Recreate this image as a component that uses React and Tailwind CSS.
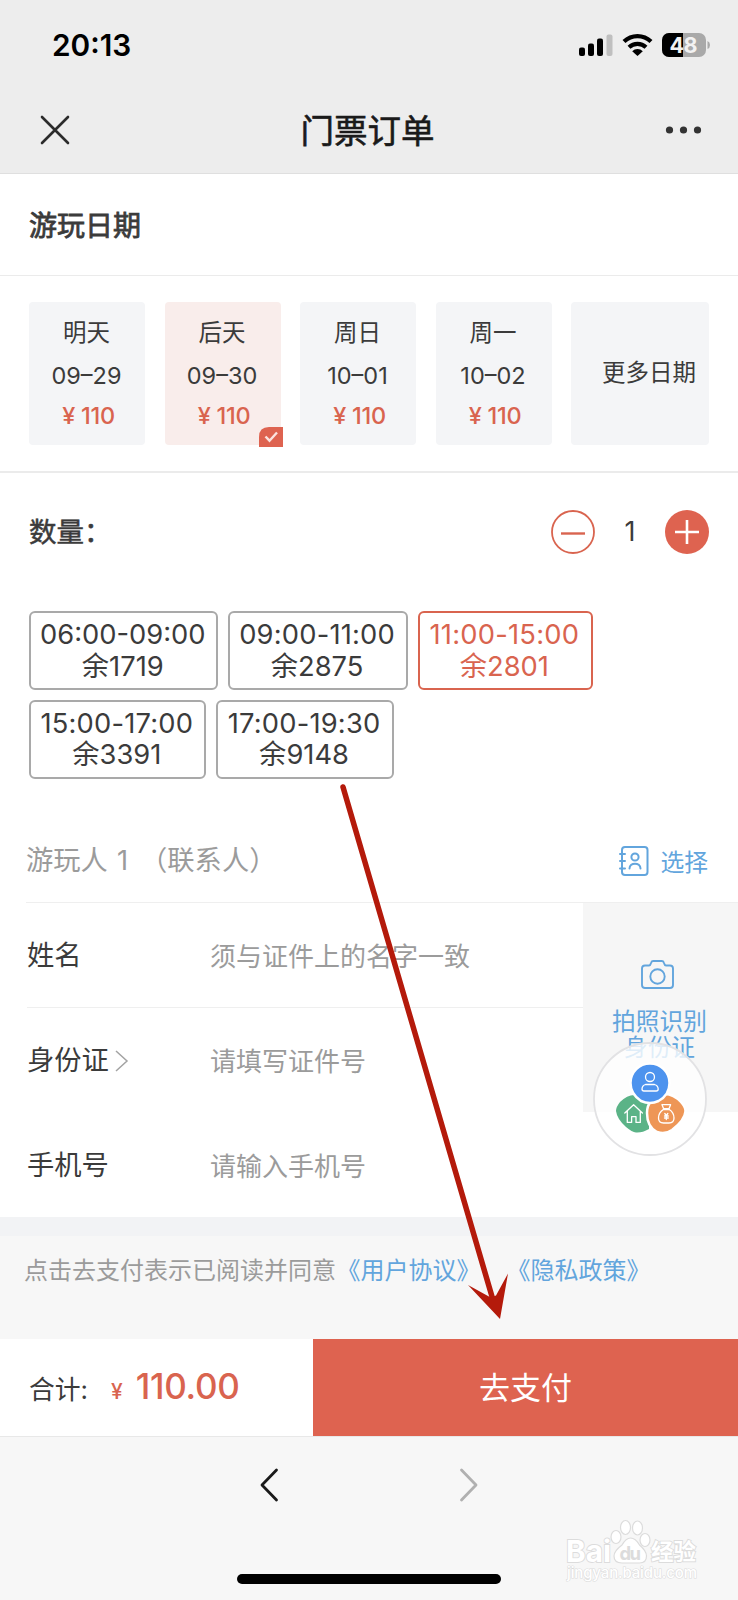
const dates = [
  { day: '明天', date: '09–29' },
  { day: '后天', date: '09–30', selected: true },
  { day: '周日', date: '10–01' },
  { day: '周一', date: '10–02' },
];

const slotRows = [
  [
    { time: '06:00-09:00', left: '余1719', width: 'w-[189px]' },
    { time: '09:00-11:00', left: '余2875', width: 'w-[180px]', spacing: 'tracking-[0.2px]' },
    { time: '11:00-15:00', left: '余2801', width: 'w-[175px]', spacing: 'tracking-[0.25px]', selected: true },
  ],
  [
    { time: '15:00-17:00', left: '余3391', width: 'w-[177px]', spacing: 'tracking-[0.2px]' },
    { time: '17:00-19:30', left: '余9148', width: 'w-[178px]', spacing: 'tracking-[0.2px]' },
  ],
];

function StatusIcons() {
  return (
    <svg width="132" height="26" viewBox="0 0 132 26">
      <rect x="0" y="15.500" width="6" height="8.500" rx="2" />
      <rect x="9" y="11.500" width="6" height="12.500" rx="2" />
      <rect x="18" y="6.500" width="6" height="17.500" rx="2" />
      <rect x="27.500" y="2.500" width="6" height="21.500" rx="2" fill="#bfbfbf" />
      <g fill="none" stroke="#000" strokeWidth="4.200">
        <path d="M45 9.500a19.500 19.500 0 0 1 27 0" />
        <path d="M50 15.300a12.500 12.500 0 0 1 17 0" />
      </g>
      <path d="M53.200 19.300a7.500 7.500 0 0 1 10.600 0L58.500 24z" />
      <rect x="83" y="1" width="44" height="24" rx="7" fill="#a9a9a9" />
      <path d="M90 1H104V25H90A7 7 0 0 1 83 18V8A7 7 0 0 1 90 1z" />
      <path d="M128.500 9q2.500 1 2.500 4t-2.500 4z" fill="#a9a9a9" />
      <text x="104.500" y="20.700" textAnchor="middle" fill="#f2f2f2" fontSize="21.500" fontWeight="700" fontFamily="Inter" textLength="28">48</text>
    </svg>
  );
}

function DateCard({ day, date, selected }) {
  return (
    <div className={`relative flex h-[143px] w-[116px] flex-col items-center rounded pt-[14px] pr-[1px] ${selected ? 'bg-[#f9edeb]' : 'bg-[#f4f5f7]'}`}>
      <div className="h-[34px] text-[23.5px] leading-[34px]">{day}</div>
      <div className="mt-[9px] h-[34px] text-[23.5px] leading-[34px]">{date}</div>
      <div className="mt-[6px] ml-[4px] h-[34px] text-[23.5px] leading-[34px] font-medium tracking-[-0.3px] text-[#d9644f]">¥ 110</div>
      {selected && (
        <svg className="absolute -right-[2px] -bottom-[2px]" width="24" height="20" viewBox="0 0 24 20">
          <path d="M0 20V10Q0 0 10 0H24V20z" fill="#de6350" />
          <path d="M6.500 9.500l4 4.200 7.500-8.200" fill="none" stroke="#fbe3df" strokeWidth="2.400" />
        </svg>
      )}
    </div>
  );
}

function Slot({ time, left, width, spacing, selected }) {
  return (
    <div className={`flex h-[79px] flex-col items-center justify-center rounded-[6px] border-2 pr-[1.5px] text-[27.3px] leading-[31.5px] whitespace-nowrap ${width} ${selected ? 'border-[#d9644f] text-[#d9644f]' : 'border-[#a9a9a9] text-[#3b3b3b]'}`}>
      <div className={spacing}>{time}</div>
      <div>{left}</div>
    </div>
  );
}

function ContactsIcon() {
  return (
    <svg width="30" height="30" viewBox="0 0 30 30" fill="none" stroke="#62a5dd" strokeWidth="2" strokeLinecap="round">
      <rect x="3" y="1" width="25.500" height="28" rx="3" />
      <path d="M1 8h5M1 15h5M1 22.500h5" />
      <circle cx="16" cy="11" r="3.600" />
      <path d="M10.500 22.500c0-6.500 11-6.500 11 0" />
    </svg>
  );
}

function CameraIcon() {
  return (
    <svg width="33" height="29" viewBox="0 0 33 29" fill="none" stroke="#62a5dd" strokeWidth="1.900">
      <path d="M4 5.500h4q1.200 0 1.600-1.500l.6-1.500q.5-1.500 2-1.500h8.600q1.500 0 2 1.500l.6 1.500q.4 1.500 1.600 1.500h4q3 0 3 3V25q0 3-3 3H4q-3 0-3-3V8.500q0-3 3-3z" />
      <circle cx="16.500" cy="16.500" r="7.200" />
    </svg>
  );
}

function FloatingMenu() {
  return (
    <svg width="116" height="116" viewBox="0 0 116 116" className="absolute top-[1041px] left-[591.5px]">
      <circle cx="58" cy="58" r="56" fill="#fff" fillOpacity="0.800" stroke="#e2e2e4" strokeWidth="1.800" />
      <path d="M24 70Q24 66 28 61Q36 53 44 54Q52 54 57 61V88Q50 92 44 91.500Q40 91 34 86Q25 78 24 70z" fill="#5bb387" />
      <path d="M93.500 70Q93.500 66 89 61Q81 52.500 72 53Q55 57 55 72Q55 86 65 91Q73 94 80 89Q93 79 93.500 70z" fill="#ee9656" stroke="#fff" strokeWidth="2.500" />
      <path d="M38.500 42a19.500 19.500 0 0 1 39 0Q77.500 54 66.500 60Q58 64 49 60Q38.500 53 38.500 42z" fill="#4d93ee" stroke="#fff" strokeWidth="2.500" />
      <g fill="none" stroke="#fff" strokeWidth="1.300" strokeLinejoin="round" strokeLinecap="round">
        <circle cx="58" cy="36" r="4.500" />
        <path d="M53.500 43.500h9q3.500 1 3.700 4.500 0 2-2 2H52q-2 0-2-2 .2-3.500 3.500-4.500z" />
        <path d="M32.800 72l8.800-8.300 8.800 8.300M35.300 70v11.400h4.300v-5.700h4.400v5.700h4.300V70" />
        <path d="M70 63.700h8.600l-1.600 4h-5.400zM71.300 68.500h6c3 2 4.700 5 4.700 8.500q0 5-5 5h-5.500q-5 0-5-5c0-3.500 1.800-6.500 4.800-8.500z" />
        <path d="M72.800 72.500l1.500 2 1.500-2M72.500 75h3.800M72.500 77h3.800M74.300 75v3.500" />
      </g>
    </svg>
  );
}

function Row({ label, placeholder, chevron, line }) {
  return (
    <div className={`flex h-[105px] items-center pt-[2px] ${line ? 'border-b border-[#efefef]' : ''}`}>
      <div className="flex w-[183px] items-center text-[27.3px]">
        {label}
        {chevron && (
          <svg width="16" height="24" viewBox="0 0 16 24" className="-mt-[2px] ml-[5px]" fill="none" stroke="#a3a3a3" strokeWidth="1.500">
            <path d="M2 2l11 10L2 22" />
          </svg>
        )}
      </div>
      <div className="text-[26px] text-[#9b9b9b]">{placeholder}</div>
    </div>
  );
}

function Watermark() {
  return (
    <svg width="140" height="70" viewBox="0 0 140 70" className="absolute top-[1516px] left-[562px]">
      <g fill="#fff" stroke="#dcdcdc" strokeWidth="1.200">
        <ellipse cx="54" cy="21" rx="5" ry="6.500" />
        <ellipse cx="63.500" cy="11.500" rx="5" ry="7" />
        <ellipse cx="75.500" cy="12" rx="5" ry="7" />
        <ellipse cx="83" cy="24" rx="5" ry="6.500" />
        <path d="M68.500 22q5 0 9 7 7 6 7 11 0 7-7 7H60q-8 0-8-7 0-5 8-11 4-7 8.500-7z" />
      </g>
      <g fill="#fff" stroke="#dcdcdc" strokeWidth="1.800" paintOrder="stroke" fontFamily="Inter, 'Noto Sans CJK SC', sans-serif" fontWeight="700">
        <text x="4" y="45.500" fontSize="30" textLength="45" lengthAdjust="spacingAndGlyphs">Bai</text>
        <text x="89" y="44" fontSize="22.500" textLength="45">经验</text>
        <text x="5" y="62" fontSize="15" fontWeight="500" strokeWidth="1.200" textLength="130">jingyan.baidu.com</text>
      </g>
      <text x="57.500" y="43.500" fontSize="18.500" fontWeight="700" fontFamily="Inter" fill="#dcdcdc" textLength="21.500">du</text>
    </svg>
  );
}

export default function App() {
  return (
    <div className="relative h-[1600px] w-[738px] overflow-hidden bg-white font-['Inter','Noto_Sans_CJK_SC',sans-serif] text-[#3b3b3b]">
      <header className="h-[174px] border-b border-[#dfdfdf] bg-[#ededed] text-black">
        <div className="flex h-[90px] items-center justify-between pr-[27px] pl-[52px]">
          <div className="text-[29.8px] font-semibold">20:13</div>
          <StatusIcons />
        </div>
        <div className="flex h-[80px] items-center justify-between pr-[36px] pl-[40px]">
          <svg width="30" height="30" viewBox="0 0 30 30" fill="none" stroke="#2b2b2b" strokeWidth="2.600" strokeLinecap="round">
            <path d="M2 2l26 26M28 2L2 28" />
          </svg>
          <h1 className="mt-[3px] text-[33.5px] text-[#1a1a1a] [-webkit-text-stroke:0.6px_#1a1a1a]">门票订单</h1>
          <svg width="37" height="10" viewBox="0 0 37 10" fill="#333">
            <circle cx="4.500" cy="5" r="3.600" />
            <circle cx="18.500" cy="5" r="3.600" />
            <circle cx="32.500" cy="5" r="3.600" />
          </svg>
        </div>
      </header>

      <div className="flex h-[102px] items-center border-b border-[#ebebeb] pt-[2px] pl-[29px] text-[28px] [-webkit-text-stroke:0.8px_#3b3b3b]">游玩日期</div>

      <div className="flex h-[197px] gap-[19.5px] border-b-2 border-[#ebebeb] pt-[26px] pl-[29px]">
        {dates.map((d) => <DateCard key={d.date} {...d} />)}
        <div className="flex h-[143px] w-[138px] items-center justify-end rounded bg-[#f4f5f7] pr-[13px] pb-[2px] text-[23.5px]">更多日期</div>
      </div>

      <div className="flex h-[118px] items-center justify-between pr-[29px] pl-[29px]">
        <div className="pt-[2px] text-[27.5px] [-webkit-text-stroke:0.5px_#3b3b3b]">数量：</div>
        <div className="flex items-center">
          <svg width="44" height="44" viewBox="0 0 44 44" fill="none" stroke="#d9644f">
            <circle cx="22" cy="22" r="21" strokeWidth="1.800" />
            <path d="M10 23.500h24" strokeWidth="2.400" />
          </svg>
          <div className="w-[70px] text-center text-[27px]">1</div>
          <svg width="44" height="44" viewBox="0 0 44 44" fill="none">
            <circle cx="22" cy="22" r="22" fill="#de6350" />
            <path d="M10 22h24M22 10v24" stroke="#fff" strokeWidth="2.600" />
          </svg>
        </div>
      </div>

      <div className="flex h-[227px] flex-col gap-[9.5px] pt-[20px] pl-[29px]">
        {slotRows.map((row) => (
          <div key={row[0].time} className="flex gap-[9.8px]">
            {row.map((s) => <Slot key={s.time} {...s} />)}
          </div>
        ))}
      </div>

      <div className="ml-[26px] flex h-[85px] items-center justify-between border-b border-[#efefef] pr-[30px]">
        <div className="pt-[2px] text-[27.3px] text-[#9b9b9b]">游玩人<span className="ml-[9px]">1</span><span className="ml-[12px]">（联系人）</span></div>
        <div className="flex items-center gap-[11px] pt-[2px] text-[23.8px] text-[#62a5dd]">
          <ContactsIcon />
          <span className="pt-[3px]">选择</span>
        </div>
      </div>

      <div className="flex h-[314px]">
        <div className="w-[583px] pl-[27px]">
          <Row label="姓名" placeholder="须与证件上的名字一致" line />
          <Row label="身份证" placeholder="请填写证件号" chevron />
          <Row label="手机号" placeholder="请输入手机号" />
        </div>
        <div className="flex h-[209px] w-[155px] flex-col items-center bg-[#f6f6f6] pt-[57px] pr-[6px] text-[23.7px] leading-[26px] text-[#62a5dd]">
          <CameraIcon />
          <div className="mt-[20px] ml-[4px]">拍照识别</div>
          <div className="ml-[4px]">身份证</div>
        </div>
      </div>

      <div className="h-[19px] bg-[#f2f3f5]" />
      <div className="flex h-[103px] bg-[#f7f7f7] pt-[17px] pl-[24px] text-[24px] leading-[36px] whitespace-pre text-[#9b9b9b]">
        点击去支付表示已阅读并同意
        <span className="ml-[0.5px] text-[#62a5dd]">《用户协议》</span>
        <span className="ml-[26px] text-[#62a5dd]">《隐私政策》</span>
      </div>

      <div className="flex h-[97px]">
        <div className="flex w-[313px] items-baseline pt-[21px] pl-[29px]">
          <span className="text-[25.8px]">合计:</span>
          <span className="ml-[23px] text-[21px] font-medium text-[#d9644f]">¥</span>
          <span className="ml-[13px] text-[35px] font-medium tracking-[-0.3px] text-[#d9644f]">110.00</span>
        </div>
        <div className="flex flex-1 items-center justify-center bg-[#de6350] pt-[1px] text-[31px] text-white">去支付</div>
      </div>

      <footer className="flex h-[164px] flex-col items-center border-t border-[#e8e8e8] bg-[#f7f7f7] pt-[30px]">
        <div className="flex gap-[180px] pr-[1px]">
          <svg width="20" height="36" viewBox="0 0 20 36" fill="none" stroke="#1a1a1a" strokeWidth="2.800" strokeLinecap="round" strokeLinejoin="round">
            <path d="M17.500 3L3 18L17.500 33" />
          </svg>
          <svg width="20" height="36" viewBox="0 0 20 36" fill="none" stroke="#b0b0b0" strokeWidth="2.800" strokeLinecap="round" strokeLinejoin="round">
            <path d="M2.500 3L17 18L2.500 33" />
          </svg>
        </div>
        <div className="mt-[71px] h-[10px] w-[264px] rounded-full bg-black" />
      </footer>

      <FloatingMenu />
      <Watermark />
      <svg width="180" height="550" viewBox="335 776 180 550" className="pointer-events-none absolute top-[776px] left-[335px]">
        <path d="M343 787L493 1300" stroke="#b41a0b" strokeWidth="5.500" strokeLinecap="round" />
        <path d="M500 1319L468 1285L490.700 1297.500L496 1295.500L508 1273.500z" fill="#b41a0b" />
      </svg>
    </div>
  );
}
